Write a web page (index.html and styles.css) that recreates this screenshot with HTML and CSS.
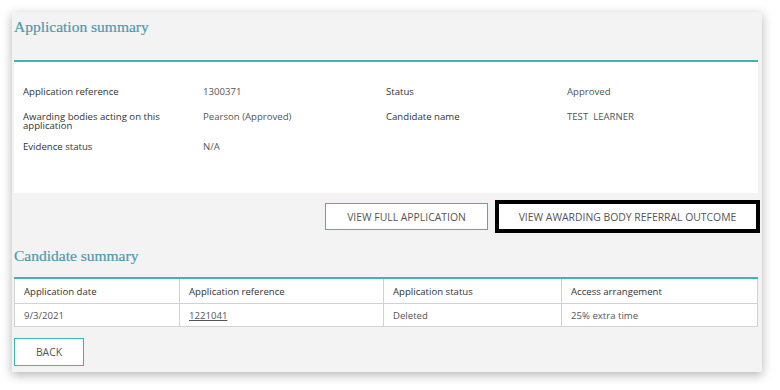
FILE: index.html
```html
<!DOCTYPE html>
<html lang="en">
<head>
    <meta charset="UTF-8">
    <title>Application summary</title>
    <link rel="stylesheet" href="styles.css">
</head>
<body>

    <div class="card">
        <div class="card-head">
            <h2>Application summary</h2>
        </div>

        <div class="details">
            <div class="info-row">
                <span class="label">Application reference</span>
                <span class="value">1300371</span>
                <span class="label">Status</span>
                <span class="value">Approved</span>
            </div>
            <div class="info-row tall">
                <span class="label">Awarding bodies acting on this application</span>
                <span class="value">Pearson (Approved)</span>
                <span class="label">Candidate name</span>
                <span class="value">TEST&nbsp; LEARNER</span>
            </div>
            <div class="info-row">
                <span class="label">Evidence status</span>
                <span class="value">N/A</span>
                <span></span>
                <span></span>
            </div>
        </div>

        <div class="actions">
            <button class="btn btn-wide">View full application</button>
            <button class="btn btn-focus">View awarding body referral outcome</button>
        </div>

        <h2 class="sub-title">Candidate summary</h2>

        <table class="summary">
            <thead>
                <tr>
                    <th class="col-date">Application date</th>
                    <th class="col-ref">Application reference</th>
                    <th class="col-status">Application status</th>
                    <th>Access arrangement</th>
                </tr>
            </thead>
            <tbody>
                <tr>
                    <td>9/3/2021</td>
                    <td><a href="#">1221041</a></td>
                    <td>Deleted</td>
                    <td>25% extra time</td>
                </tr>
            </tbody>
        </table>

        <button class="btn btn-back">Back</button>
    </div>

</body>
</html>
```

FILE: styles.css
```css
body {
    font-family: 'Open Sans', 'Liberation Sans', sans-serif;
    background-color: #ffffff;
    margin: 0;
    padding: 12px;
}

.card {
    width: 744px;
    padding: 5px 4px 6px 2px;
    background-color: #f3f3f3;
    box-shadow: 0 3px 10px rgba(0, 0, 0, 0.3);
}

h2 {
    font-family: 'Liberation Serif', serif;
    font-weight: normal;
    font-size: 15.5px;
    line-height: 20px;
    color: #4f98ad;
    margin: 0;
    -webkit-text-stroke: 0.2px #4f98ad;
}

.card-head {
    height: 43px;
    border-bottom: 2px solid #3db6b1;
}

.details {
    background-color: #ffffff;
    padding: 25px 0 41px 9px;
    font-size: 9.6px;
}

.info-row {
    display: grid;
    grid-template-columns: 180px 183px 181px 1fr;
    line-height: 10px;
    margin-bottom: 15px;
}

.info-row.tall {
    line-height: 9px;
    margin-bottom: 12px;
}

.info-row:last-child {
    margin-bottom: 0;
}

.label {
    color: #333;
    padding-right: 30px;
}

.value {
    color: #555;
}

.actions {
    display: flex;
    justify-content: flex-end;
    gap: 10px;
    margin-top: 10px;
    padding-right: 1px;
}

.btn {
    font-family: 'Open Sans', 'Liberation Sans', sans-serif;
    font-size: 10.4px;
    text-transform: uppercase;
    color: #555;
    background-color: white;
    border: 1px solid #3db6b1;
    height: 27px;
    padding: 0;
    cursor: pointer;
}

.btn-wide {
    width: 163px;
}

.btn-focus {
    width: 259px;
    border-color: #000;
    outline: 3px solid #000;
}

.sub-title {
    margin: 16px 0 11px;
}

.summary {
    width: 744px;
    border-collapse: collapse;
    background-color: white;
    border-top: 2px solid #3db6b1;
    font-size: 9.6px;
    text-align: left;
}

.summary th, .summary td {
    border: 1px solid #d2d2d2;
    padding: 0 9px;
    color: #333;
}

.summary th {
    font-weight: normal;
    height: 24px;
    border-top: none;
}

.summary td {
    height: 22px;
    color: #555;
}

.summary a {
    color: #555;
}

.col-date {
    width: 146px;
}

.col-ref {
    width: 185px;
}

.col-status {
    width: 159px;
}

.btn-back {
    display: block;
    width: 70px;
    height: 28px;
    margin-top: 11px;
}
```
